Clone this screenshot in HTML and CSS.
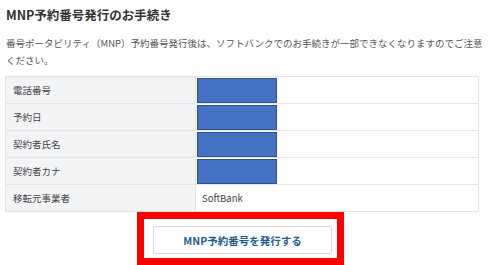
FILE: index.html
```html
<!DOCTYPE html>
<html lang="ja">

<head>
    <meta charset="UTF-8">
    <meta name="viewport" content="width=device-width, initial-scale=1.0">
    <title>MNP予約番号発行のお手続き</title>
    <link rel="stylesheet" href="styles.css">
</head>

<body>
    <div class="page">
        <h1 class="title">MNP予約番号発行のお手続き</h1>
        <p class="notice">番号ポータビリティ（MNP）予約番号発行後は、ソフトバンクでのお手続きが一部できなくなりますのでご注意ください。</p>

        <table class="info">
            <tr>
                <th>電話番号</th>
                <td><span class="masked"></span></td>
            </tr>
            <tr>
                <th>予約日</th>
                <td><span class="masked"></span></td>
            </tr>
            <tr>
                <th>契約者氏名</th>
                <td><span class="masked"></span></td>
            </tr>
            <tr>
                <th>契約者カナ</th>
                <td><span class="masked"></span></td>
            </tr>
            <tr>
                <th>移転元事業者</th>
                <td class="text">SoftBank</td>
            </tr>
        </table>

        <div class="actions">
            <div class="highlight">
                <button class="issue-btn">MNP予約番号を発行する</button>
            </div>
        </div>
    </div>
</body>

</html>
```

FILE: styles.css
```css
body {
    margin: 0;
    background-color: white;
    color: #333;
    font-family: "Noto Sans CJK JP", "Noto Sans", sans-serif;
}

.page {
    padding: 0 6px 0 5px;
    width: 485px;
}

.title {
    margin: 0;
    padding: 6px 0 0 1px;
    font-size: 12.5px;
    line-height: 18px;
    font-weight: bold;
    color: #333;
}

.notice {
    margin: 11px 0 0 1px;
    font-size: 9.5px;
    line-height: 17px;
    color: #555;
}

.info {
    margin-top: 7px;
    width: 474px;
    border-collapse: collapse;
    border: 1px solid #e4e4e4;
    font-size: 9.5px;
}

.info th,
.info td {
    border: 1px solid #e4e4e4;
    height: 26px;
    padding: 0;
    vertical-align: top;
}

.info th {
    width: 182px;
    padding-left: 7px;
    text-align: left;
    font-weight: normal;
    line-height: 26px;
    color: #444;
    background-color: #f3f4f6;
}

.info td {
    padding-left: 1px;
}

.info td.text {
    padding-left: 6px;
    line-height: 26px;
    color: #444;
}

.masked {
    display: block;
    width: 78px;
    height: 23px;
    margin-top: 1px;
    background-color: #4472c4;
    border: 1px solid #2f528f;
}

.actions {
    display: flex;
    justify-content: center;
    padding-right: 14px;
}

.highlight {
    border: 7px solid #ff0000;
    padding: 7px 5px 4px 9px;
}

.issue-btn {
    display: block;
    width: 179px;
    height: 28px;
    margin: 0;
    padding: 0;
    background-color: white;
    border: 1px solid #d6d9dd;
    border-radius: 2px;
    font-family: "Noto Sans CJK JP", "Noto Sans", sans-serif;
    font-size: 10.5px;
    font-weight: bold;
    color: #1f5d8e;
    cursor: pointer;
}
```
